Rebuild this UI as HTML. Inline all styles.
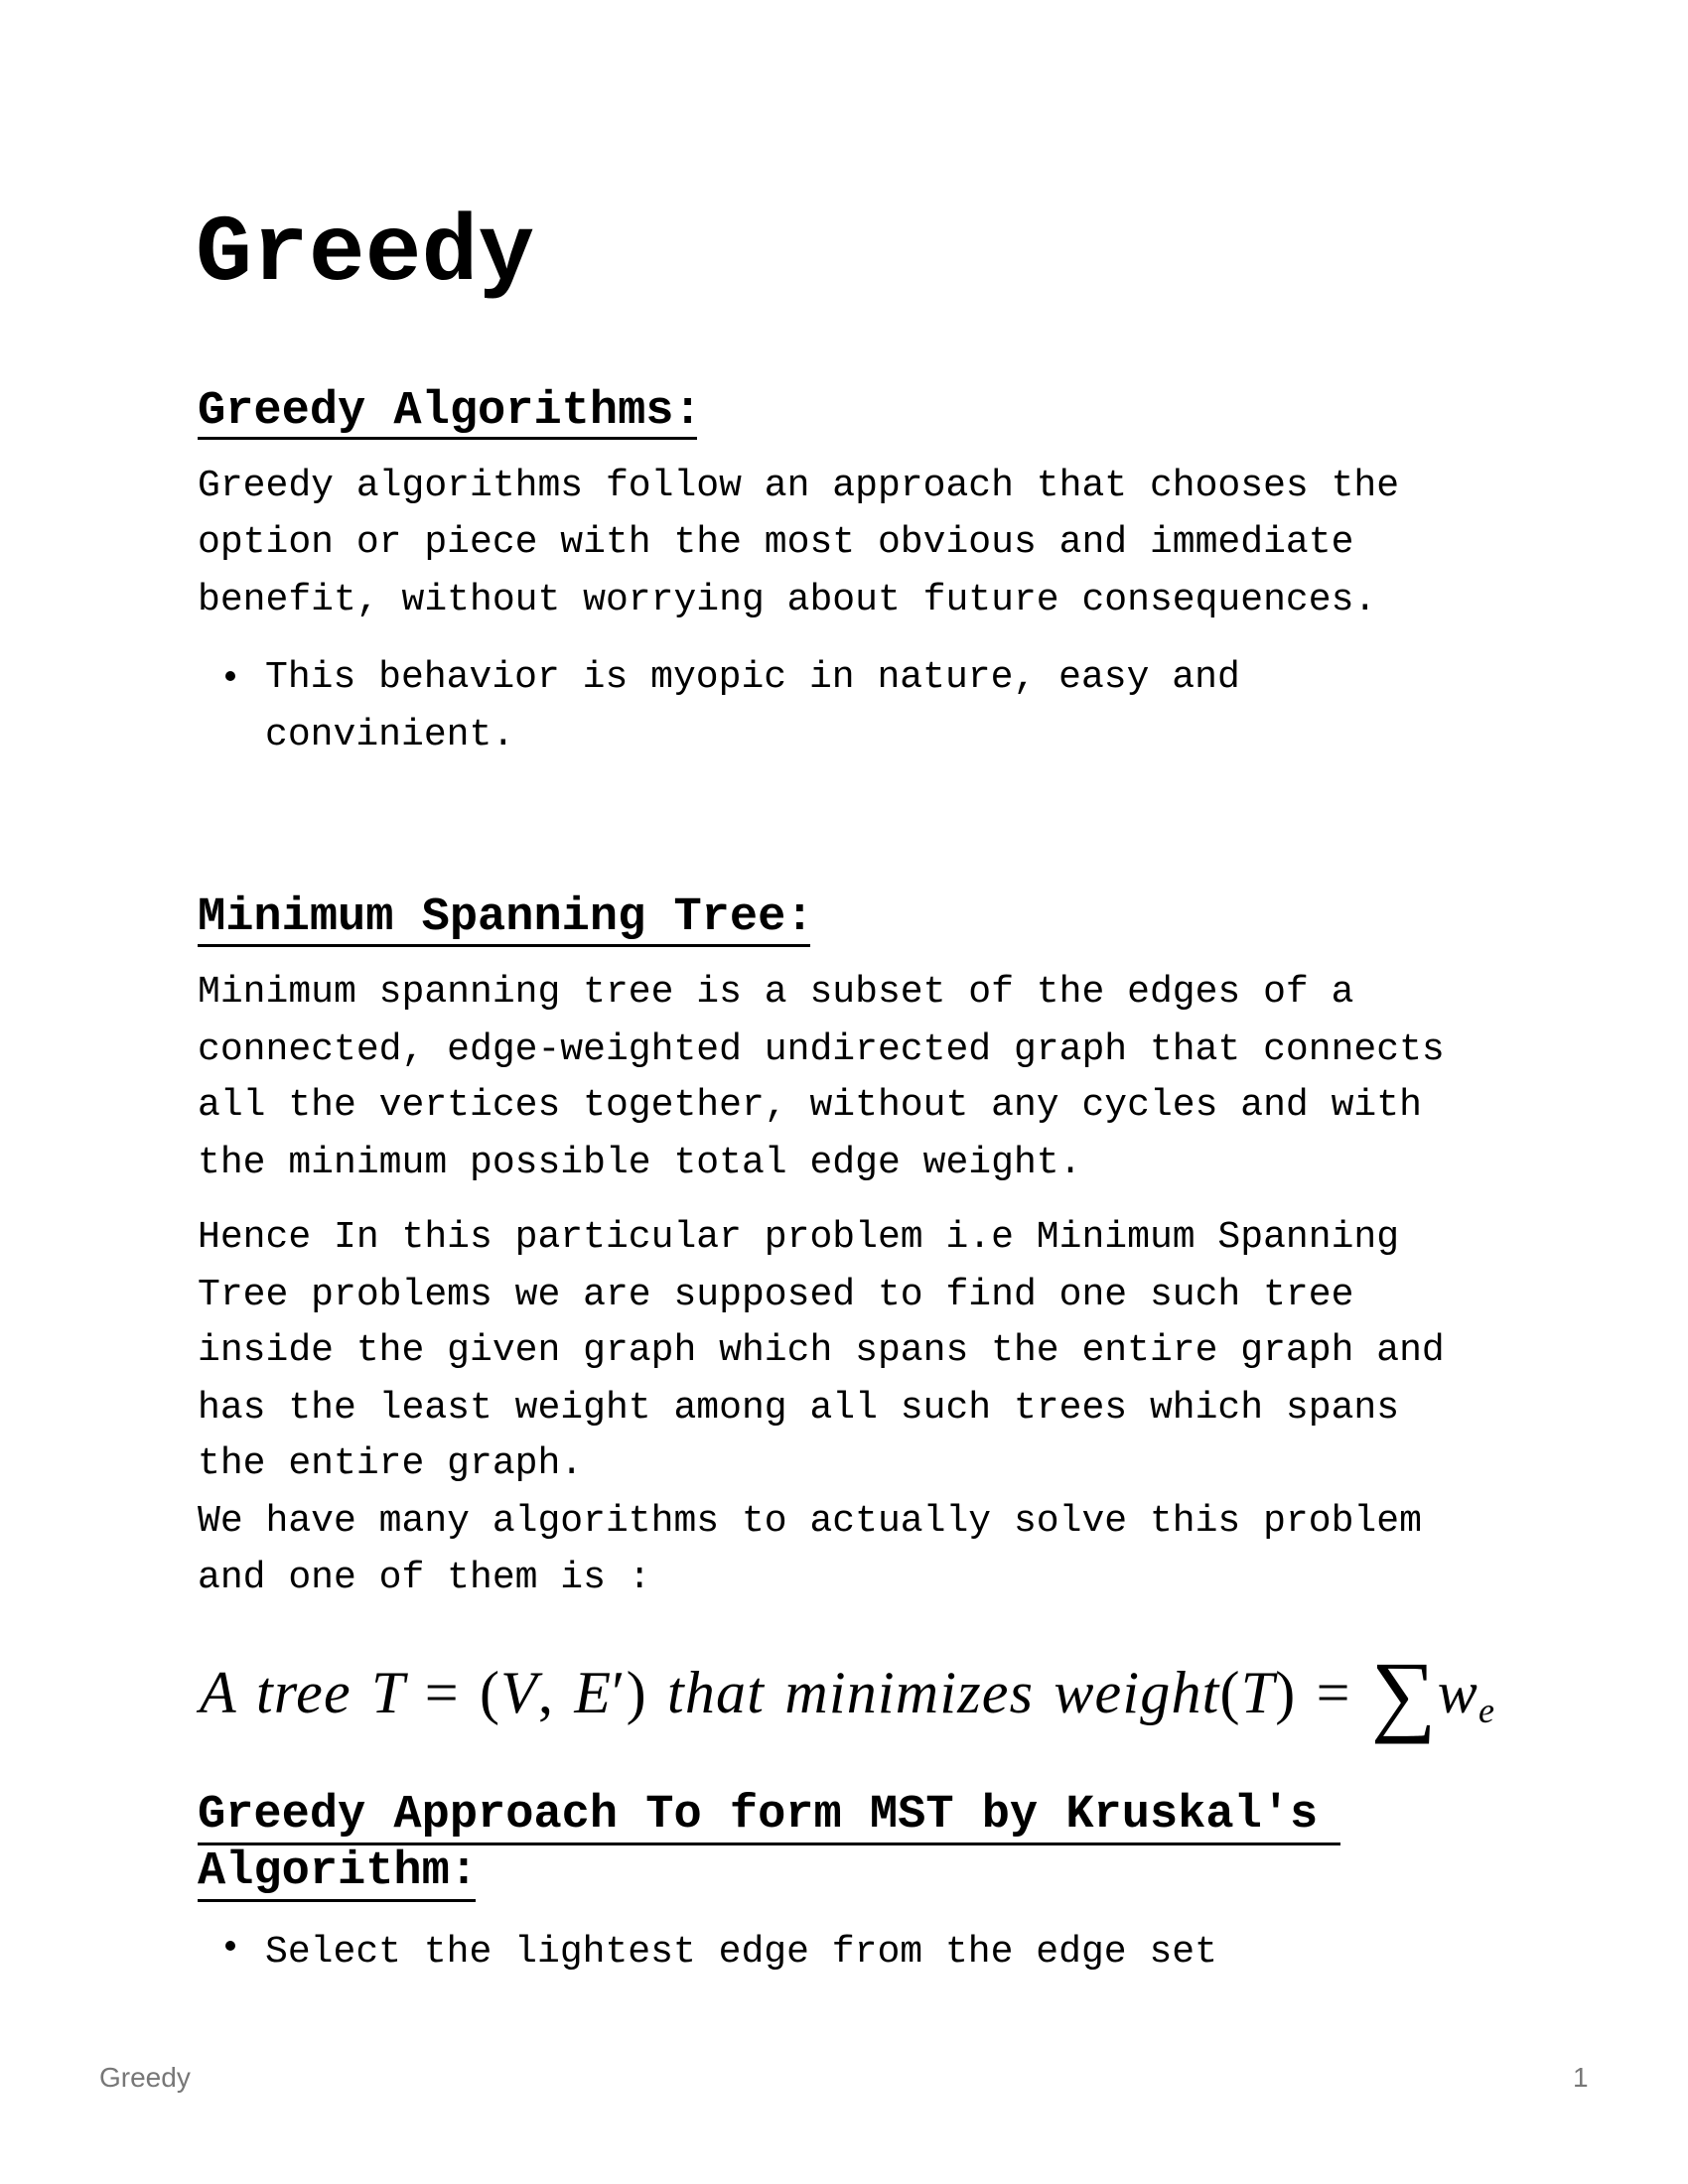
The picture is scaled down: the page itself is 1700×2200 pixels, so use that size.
<!DOCTYPE html>
<html><head><meta charset="utf-8"><style>
html,body{margin:0;padding:0;background:#fff;width:1700px;height:2200px;overflow:hidden;position:relative}
.l{position:absolute;white-space:pre;line-height:1;color:#000;font-family:"Liberation Mono",monospace}
.b{font-size:38.05px}
.h{font-size:47px;font-weight:bold}
.u{position:absolute;height:2.5px;background:#000}
.dot{position:absolute;width:10px;height:10px;border-radius:50%;background:#000}
</style></head><body>
<div class="l" style="left:197px;top:210px;font-size:94.8px;font-weight:bold">Greedy</div>

<div class="l h" style="left:199px;top:391px">Greedy Algorithms:</div>
<div class="u" style="left:199px;top:440px;width:503px"></div>
<div class="l b" style="left:199px;top:471px">Greedy algorithms follow an approach that chooses the</div>
<div class="l b" style="left:199px;top:528px">option or piece with the most obvious and immediate</div>
<div class="l b" style="left:199px;top:586px">benefit, without worrying about future consequences.</div>
<div class="dot" style="left:227px;top:676px"></div>
<div class="l b" style="left:267px;top:664px">This behavior is myopic in nature, easy and</div>
<div class="l b" style="left:267px;top:722px">convinient.</div>

<div class="l h" style="left:199px;top:901px">Minimum Spanning Tree:</div>
<div class="u" style="left:199px;top:951px;width:617px"></div>
<div class="l b" style="left:199px;top:981px">Minimum spanning tree is a subset of the edges of a</div>
<div class="l b" style="left:199px;top:1039px">connected, edge-weighted undirected graph that connects</div>
<div class="l b" style="left:199px;top:1095px">all the vertices together, without any cycles and with</div>
<div class="l b" style="left:199px;top:1153px">the minimum possible total edge weight.</div>
<div class="l b" style="left:199px;top:1228px">Hence In this particular problem i.e Minimum Spanning</div>
<div class="l b" style="left:199px;top:1286px">Tree problems we are supposed to find one such tree</div>
<div class="l b" style="left:199px;top:1342px">inside the given graph which spans the entire graph and</div>
<div class="l b" style="left:199px;top:1400px">has the least weight among all such trees which spans</div>
<div class="l b" style="left:199px;top:1456px">the entire graph.</div>
<div class="l b" style="left:199px;top:1514px">We have many algorithms to actually solve this problem</div>
<div class="l b" style="left:199px;top:1571px">and one of them is :</div>

<div class="l" style="left:201px;top:1648px;font-family:'Liberation Serif',serif;font-style:italic;font-size:60px;letter-spacing:1.2px;word-spacing:4px">A tree T <span style="font-style:normal">= (</span>V<span style="font-style:normal">,</span> E<span style="font-style:normal">′)</span> that minimizes weight<span style="font-style:normal">(</span>T<span style="font-style:normal">) =</span> <span style="font-style:normal;font-size:92px;position:relative;top:12px">∑</span>w<span style="font-size:36px;position:relative;top:10px">e</span></div>

<div class="l h" style="left:199px;top:1805px">Greedy Approach To form MST by Kruskal's </div>
<div class="u" style="left:199px;top:1856px;width:1151px"></div>
<div class="l h" style="left:199px;top:1862px">Algorithm:</div>
<div class="u" style="left:199px;top:1913px;width:280px"></div>
<div class="dot" style="left:227px;top:1955px"></div>
<div class="l b" style="left:267px;top:1948px">Select the lightest edge from the edge set</div>

<div class="l" style="left:100px;top:2079px;font-family:'Liberation Sans',sans-serif;font-size:28px;color:#777">Greedy</div>
<div class="l" style="left:1584px;top:2079px;font-family:'Liberation Sans',sans-serif;font-size:28px;color:#777">1</div>
</body></html>
